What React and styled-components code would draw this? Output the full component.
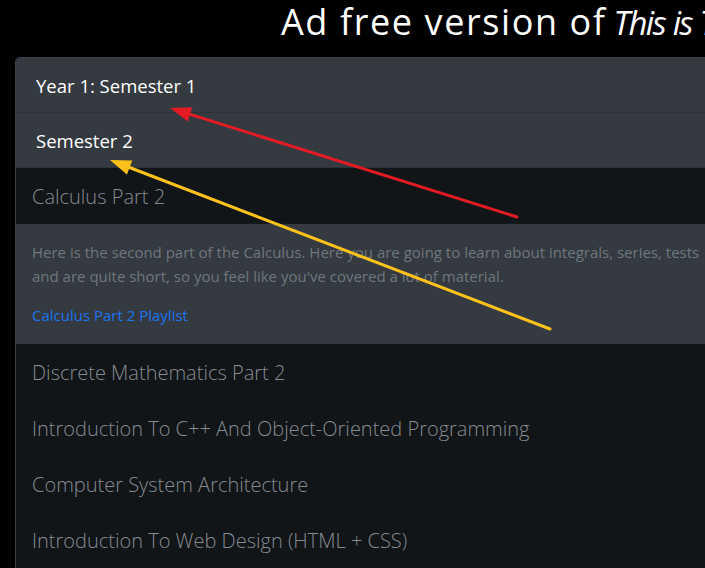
import styled, { createGlobalStyle } from 'styled-components';

const GlobalStyle = createGlobalStyle`
  html, body {
    margin: 0;
    background: #000;
  }
  body {
    font-family: 'Open Sans', 'Noto Sans', sans-serif;
    overflow: hidden;
  }
`;

const courses = [
  'Discrete Mathematics Part 2',
  'Introduction To C++ And Object-Oriented Programming',
  'Computer System Architecture',
  'Introduction To Web Design (HTML + CSS)',
];

const arrows = [
  { from: [517, 217], to: [170, 108], color: '#e21b25' },
  { from: [550, 329], to: [110, 160], color: '#fbc21b' },
];

const headPoints = ([fx, fy], [tx, ty], len = 21, half = 7.5) => {
  const dx = tx - fx;
  const dy = ty - fy;
  const d = Math.hypot(dx, dy);
  const ux = dx / d;
  const uy = dy / d;
  const bx = tx - ux * len;
  const by = ty - uy * len;
  return [
    [tx, ty],
    [bx - uy * half, by + ux * half],
    [bx + uy * half, by - ux * half],
  ]
    .map((p) => p.join(','))
    .join(' ');
};

const App = () => {
  return (
    <Page>
      <GlobalStyle />
      <Title>
        Ad free version of <em>This is T</em>
      </Title>
      <Card>
        <HeaderRow>Year 1: Semester 1</HeaderRow>
        <HeaderRow>Semester 2</HeaderRow>
        <CourseItem>Calculus Part 2</CourseItem>
        <Panel>
          <Description>
            Here is the second part of the Calculus. Here you are going to learn about integrals, series, tests
            <br />
            and are quite short, so you feel like you've covered a lot of material.
          </Description>
          <PlaylistLink href="#">Calculus Part 2 Playlist</PlaylistLink>
        </Panel>
        {courses.map((c) => (
          <CourseItem key={c}>{c}</CourseItem>
        ))}
      </Card>
      <Annotations width="705" height="568">
        {arrows.map((a, i) => (
          <g key={i}>
            <line
              x1={a.from[0]}
              y1={a.from[1]}
              x2={a.to[0] + (a.from[0] - a.to[0]) * 0.04}
              y2={a.to[1] + (a.from[1] - a.to[1]) * 0.04}
              stroke={a.color}
              strokeWidth="3"
              strokeLinecap="round"
            />
            <polygon points={headPoints(a.from, a.to)} fill={a.color} />
          </g>
        ))}
      </Annotations>
    </Page>
  );
};

export default App;

const Page = styled.div`
  position: relative;
  width: 705px;
  height: 568px;
  overflow: hidden;
  background: #000;
`;

const Title = styled.h1`
  margin: 0;
  height: 57px;
  padding-left: 281px;
  font-size: 36px;
  font-weight: 400;
  letter-spacing: 1.6px;
  line-height: 44px;
  color: #fff;
  white-space: nowrap;
  em {
    margin-left: -4px;
    font-style: italic;
    font-size: 33px;
    letter-spacing: -1.6px;
    word-spacing: 0.5px;
  }
`;

const Card = styled.div`
  margin-left: 15px;
  width: 900px;
  border: 1px solid #3b4046;
  border-radius: 5px 0 0 0;
  overflow: hidden;
`;

const HeaderRow = styled.div`
  display: flex;
  align-items: center;
  height: 53px;
  padding: 1px 0 0 20px;
  background: #343a40;
  border-bottom: 1px solid #2d3237;
  color: #fff;
  font-size: 18.5px;
`;

const CourseItem = styled.div`
  display: flex;
  align-items: center;
  height: 54px;
  padding: 1px 0 0 16px;
  background: #121518;
  border-bottom: 1px solid #16191c;
  color: #858b91;
  font-size: 20px;
  font-weight: 300;
`;

const Panel = styled.div`
  height: 120px;
  box-sizing: border-box;
  padding: 16px 16px 0;
  background: #343a40;
`;

const Description = styled.p`
  margin: 0 0 16px;
  color: #6f767d;
  font-size: 15px;
  line-height: 24px;
  white-space: nowrap;
`;

const PlaylistLink = styled.a`
  color: #1b74f0;
  font-size: 15px;
  text-decoration: none;
`;

const Annotations = styled.svg`
  position: absolute;
  left: 0;
  top: 0;
  pointer-events: none;
`;
